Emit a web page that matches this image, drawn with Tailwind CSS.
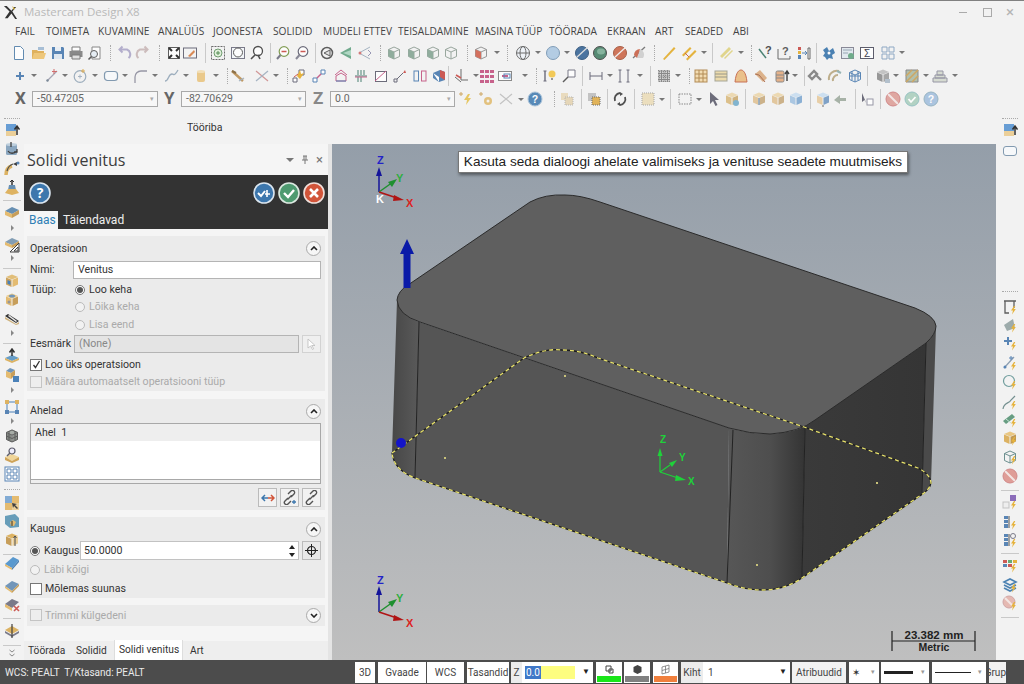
<!DOCTYPE html>
<html lang="en">
<head>
  <meta charset="UTF-8" />
  <title>Mastercam Design X8</title>
  <script src="https://cdn.jsdelivr.net/npm/@tailwindcss/browser@4"></script>
</head>
<body class="bg-[#f2f2f2] w-[1024px] h-[684px] overflow-hidden flex flex-col font-['Roboto',sans-serif] text-[#333]">

  <!-- title bar -->
  <div class="h-[23px] border-t border-[#808080] flex items-center shrink-0">
    <svg class="w-[15px] h-[15px] ml-[3px]" viewBox="0 0 16 16"><path d="M1 1l6 6-5 7h3l4-5 4 6h2l-5-8 4-5h-2l-3 4-5-5z" fill="#333"/><path d="M10 1l3 3-2 1z" fill="#c9a93a"/></svg>
    <span class="ml-[6px] text-[11.5px] text-[#b9b9b9] font-['Open_Sans',sans-serif]">Mastercam Design X8</span>
    <div class="ml-auto flex items-center text-[#b5b5b5]">
      <span class="w-[8px] h-[1px] bg-[#aaa] mr-[16px]"></span>
      <span class="w-[9px] h-[9px] border border-[#aaa] mr-[14px]"></span>
      <span class="text-[15px] leading-none mr-[10px]">×</span>
    </div>
  </div>

  <!-- menu -->
  <div class="h-[18px] flex items-center text-[10.2px] pl-[15px] shrink-0 text-[#444] whitespace-nowrap font-['Open_Sans',sans-serif]">
    <span class="w-[31px]">FAIL</span>
    <span class="w-[52px]">TOIMETA</span>
    <span class="w-[60px]">KUVAMINE</span>
    <span class="w-[55px]">ANALÜÜS</span>
    <span class="w-[60px]">JOONESTA</span>
    <span class="w-[50px]">SOLIDID</span>
    <span class="w-[75px]">MUDELI ETTEV</span>
    <span class="w-[77px]">TEISALDAMINE</span>
    <span class="w-[74px]">MASINA TÜÜP</span>
    <span class="w-[58px]">TÖÖRADA</span>
    <span class="w-[48px]">EKRAAN</span>
    <span class="w-[30px]">ART</span>
    <span class="w-[48px]">SEADED</span>
    <span>ABI</span>
  </div>

  <!-- toolbars -->
  <div id="row1" class="h-[23px] flex items-center shrink-0"></div>
  <div id="row2" class="h-[23px] flex items-center shrink-0"></div>
  <div class="h-[24px] flex items-center shrink-0 text-[10.5px] text-[#666]">
    <span class="w-[32px] pl-[15px] text-[17px] font-bold text-[#666]">X</span>
    <div class="w-[126px] h-[16px] border border-[#a9a9a9] bg-[#f7f7f7] flex items-center pl-[4px]">-50.47205<span class="ml-auto mr-[3px] text-[7px] text-[#aaa]">▾</span></div>
    <span class="w-[23px] pl-[6px] text-[17px] font-bold text-[#666]">Y</span>
    <div class="w-[125px] h-[16px] border border-[#a9a9a9] bg-[#f7f7f7] flex items-center pl-[4px]">-82.70629<span class="ml-auto mr-[3px] text-[7px] text-[#aaa]">▾</span></div>
    <span class="w-[24px] pl-[7px] text-[17px] font-bold text-[#888]">Z</span>
    <div class="w-[125px] h-[16px] border border-[#a9a9a9] bg-[#f7f7f7] flex items-center pl-[4px]">0.0<span class="ml-auto mr-[3px] text-[7px] text-[#aaa]">▾</span></div>
    <div id="row3" class="flex items-center h-full"></div>
  </div>
  <div class="h-[5px] shrink-0"></div>

  <!-- main -->
  <div class="flex-1 flex min-h-0">
    <div id="leftStrip" class="w-[24px] flex flex-col items-center shrink-0"></div>

    <div class="flex-1 flex flex-col min-w-0">
      <div class="h-[28px] shrink-0 pl-[163px] pt-[4px] text-[10.5px] text-[#333]">Tööriba</div>

      <div class="flex-1 flex min-h-0">
        <!-- panel -->
        <div class="w-[308px] shrink-0 bg-[#f5f5f5] border-r-[4px] border-[#e4e4e4] flex flex-col text-[10.6px]">
          <div class="h-[31px] shrink-0 flex items-center pl-[3px]">
            <span class="text-[16px] text-[#3c3c3c] font-['Open_Sans',sans-serif]">Solidi venitus</span>
            <div class="ml-auto flex items-center gap-[7px] pr-[5px] text-[#777]">
              <span class="w-0 h-0 border-x-[4px] border-x-transparent border-t-[4px] border-t-[#777]"></span>
              <svg class="w-[8px] h-[10px]" viewBox="0 0 8 10"><path d="M2 1h4M3 1v4M5 1v4M1 5h6M4 5v4" stroke="#777" fill="none"/></svg>
              <span class="text-[13px] leading-none">×</span>
            </div>
          </div>

          <div class="h-[54px] shrink-0 bg-[#333] flex flex-col">
            <div class="h-[36px] flex items-center pl-[5px] pr-[3px]">
              <svg class="w-[22px] h-[22px]" viewBox="0 0 22 22"><circle cx="11" cy="11" r="10" fill="#3d77ad" stroke="#dbe6f0" stroke-width="1.6"/><text x="11" y="16" text-anchor="middle" font-size="14" font-weight="700" fill="#fff" font-family="Open Sans">?</text></svg>
              <div class="ml-auto flex gap-[3px]">
                <svg class="w-[22px] h-[22px]" viewBox="0 0 22 22"><circle cx="11" cy="11" r="10" fill="#3d77ad" stroke="#dbe6f0" stroke-width="1.6"/><path d="M5 11l3 3 4-5" stroke="#fff" stroke-width="2" fill="none"/><path d="M14 8v7M12 12h5" stroke="#fff" stroke-width="1.6"/></svg>
                <svg class="w-[22px] h-[22px]" viewBox="0 0 22 22"><circle cx="11" cy="11" r="10" fill="#4e9a70" stroke="#dce9e1" stroke-width="1.6"/><path d="M6 11l4 4 6-7" stroke="#fff" stroke-width="2.4" fill="none"/></svg>
                <svg class="w-[22px] h-[22px]" viewBox="0 0 22 22"><circle cx="11" cy="11" r="10" fill="#d2553a" stroke="#f0dfda" stroke-width="1.6"/><path d="M7 7l8 8M15 7l-8 8" stroke="#fff" stroke-width="2.6"/></svg>
              </div>
            </div>
            <div class="h-[18px] flex items-end text-[12px]">
              <span class="h-[18px] w-[34px] bg-[#f5f5f5] text-[#2f7fb5] pl-[5px] leading-[18px]">Baas</span>
              <span class="text-[#eee] ml-[5px] leading-[18px]">Täiendavad</span>
            </div>
          </div>

          <!-- Operatsioon -->
          <section class="mx-[3px] mt-[7px] h-[155px] shrink-0 bg-[#ebebeb] px-[3px]">
            <div class="h-[25px] flex items-center justify-between pr-[1px]">
              <span>Operatsioon</span>
              <span class="w-[15px] h-[15px] rounded-full border border-[#aaa] bg-[#f6f6f6] flex items-center justify-center"><svg class="w-[8px] h-[5px]" viewBox="0 0 8 5"><path d="M1 4l3-3 3 3" stroke="#222" stroke-width="1.6" fill="none"/></svg></span>
            </div>
            <div class="h-[18px] flex items-center">
              <span class="w-[43px]">Nimi:</span>
              <div class="w-[248px] h-[18px] bg-white border border-[#b4b4b4] pl-[4px] leading-[16px]">Venitus</div>
            </div>
            <div class="mt-[2px] h-[17px] flex items-center">
              <span class="w-[44px]">Tüüp:</span>
              <span class="w-[10px] h-[10px] rounded-full border border-[#777] bg-white flex items-center justify-center ml-[1px]"><span class="w-[6px] h-[6px] rounded-full bg-[#555]"></span></span>
              <span class="ml-[4px]">Loo keha</span>
            </div>
            <div class="h-[18px] flex items-center pl-[45px] text-[#aaa]">
              <span class="w-[10px] h-[10px] rounded-full border border-[#bbb] bg-[#f2f2f2]"></span>
              <span class="ml-[4px]">Lõika keha</span>
            </div>
            <div class="h-[17px] flex items-center pl-[45px] text-[#aaa]">
              <span class="w-[10px] h-[10px] rounded-full border border-[#bbb] bg-[#f2f2f2]"></span>
              <span class="ml-[4px]">Lisa eend</span>
            </div>
            <div class="mt-[2px] h-[18px] flex items-center">
              <span class="w-[44px]">Eesmärk</span>
              <div class="w-[225px] h-[18px] bg-[#e4e4e4] border border-[#b4b4b4] pl-[4px] leading-[16px] text-[#888]">(None)</div>
              <div class="ml-[3px] w-[19px] h-[18px] bg-[#efefef] border border-[#d2d2d2] flex items-center justify-center"><svg class="w-[9px] h-[12px]" viewBox="0 0 9 12"><path d="M1 1v9l2.5-2 2 3.5 1.2-.8-2-3.2H8z" fill="#fff" stroke="#bbb" stroke-width=".8"/></svg></div>
            </div>
            <div class="mt-[3px] h-[17px] flex items-center">
              <span class="w-[12px] h-[12px] border border-[#777] bg-white flex items-center justify-center"><svg class="w-[9px] h-[9px]" viewBox="0 0 9 9"><path d="M1.5 5l2 2.5L7.5 1" stroke="#333" stroke-width="1.3" fill="none"/></svg></span>
              <span class="ml-[3px]">Loo üks operatsioon</span>
            </div>
            <div class="h-[18px] flex items-center text-[#aaa]">
              <span class="w-[12px] h-[12px] border border-[#c4c4c4] bg-[#eee]"></span>
              <span class="ml-[3px]">Määra automaatselt operatsiooni tüüp</span>
            </div>
          </section>

          <!-- Ahelad -->
          <section class="mx-[3px] mt-[8px] h-[111px] shrink-0 bg-[#ebebeb] px-[3px]">
            <div class="h-[24px] flex items-center justify-between pr-[1px]">
              <span>Ahelad</span>
              <span class="w-[15px] h-[15px] rounded-full border border-[#aaa] bg-[#f6f6f6] flex items-center justify-center"><svg class="w-[8px] h-[5px]" viewBox="0 0 8 5"><path d="M1 4l3-3 3 3" stroke="#222" stroke-width="1.6" fill="none"/></svg></span>
            </div>
            <div class="w-[291px] h-[57px] bg-white border border-[#a8a8a8]">
              <div class="h-[17px] bg-[#eeeeee] pl-[4px] leading-[17px] whitespace-pre">Ahel  1</div>
            </div>
            <div class="w-[291px] h-[4px] bg-[#eee] border-x border-b border-[#a8a8a8]"></div>
            <div class="mt-[4px] flex justify-end gap-[3px] w-[291px]">
              <div class="w-[19px] h-[19px] bg-[#f2f2f2] border border-[#bbb] flex items-center justify-center"><svg class="w-[14px] h-[8px]" viewBox="0 0 14 8"><path d="M4 1L1 4l3 3M1 4h6" stroke="#3d77ad" stroke-width="1.5" fill="none"/><path d="M10 1l3 3-3 3M13 4H7" stroke="#d2553a" stroke-width="1.5" fill="none"/></svg></div>
              <div class="w-[19px] h-[19px] bg-[#f2f2f2] border border-[#bbb] flex items-center justify-center"><svg class="w-[15px] h-[15px]" viewBox="0 0 15 15"><path d="M6 8L3 11a2 2 0 0 0 3 3l3-3M9 7l3-3a2 2 0 0 0-3-3L6 4M5.500 9.500l4-4" stroke="#555" stroke-width="1.4" fill="none"/><path d="M12 10v4M10 12h4" stroke="#3d77ad" stroke-width="1.3"/></svg></div>
              <div class="w-[19px] h-[19px] bg-[#f2f2f2] border border-[#bbb] flex items-center justify-center"><svg class="w-[15px] h-[15px]" viewBox="0 0 15 15"><path d="M6 8L3 11a2 2 0 0 0 3 3l3-3M9 7l3-3a2 2 0 0 0-3-3L6 4M5.500 9.500l4-4" stroke="#555" stroke-width="1.400" fill="none"/></svg></div>
            </div>
          </section>

          <!-- Kaugus -->
          <section class="mx-[3px] mt-[7px] h-[81px] shrink-0 bg-[#ebebeb] px-[3px]">
            <div class="h-[24px] flex items-center justify-between pr-[1px]">
              <span>Kaugus</span>
              <span class="w-[15px] h-[15px] rounded-full border border-[#aaa] bg-[#f6f6f6] flex items-center justify-center"><svg class="w-[8px] h-[5px]" viewBox="0 0 8 5"><path d="M1 4l3-3 3 3" stroke="#222" stroke-width="1.6" fill="none"/></svg></span>
            </div>
            <div class="h-[19px] flex items-center">
              <span class="w-[10px] h-[10px] rounded-full border border-[#777] bg-white flex items-center justify-center"><span class="w-[6px] h-[6px] rounded-full bg-[#555]"></span></span>
              <span class="ml-[4px] w-[36px]">Kaugus</span>
              <div class="w-[219px] h-[19px] bg-white border border-[#c2c2c2] pl-[3px] flex items-center justify-between pr-[2px]">50.0000<svg class="w-[8px] h-[12px]" viewBox="0 0 8 12"><path d="M4 0l3 4H1zM4 12l3-4H1z" fill="#222"/></svg></div>
              <div class="ml-[3px] w-[19px] h-[19px] bg-[#e9e9e9] border border-[#bbb] flex items-center justify-center"><svg class="w-[13px] h-[13px]" viewBox="0 0 13 13"><circle cx="6.500" cy="6.500" r="4" fill="none" stroke="#222" stroke-width="1.200"/><path d="M6.500 0v13M0 6.500h13" stroke="#222"/></svg></div>
            </div>
            <div class="h-[20px] flex items-center text-[#aaa]">
              <span class="w-[10px] h-[10px] rounded-full border border-[#bbb] bg-[#f2f2f2]"></span>
              <span class="ml-[4px]">Läbi kõigi</span>
            </div>
            <div class="h-[17px] flex items-center">
              <span class="w-[12px] h-[12px] border border-[#777] bg-white"></span>
              <span class="ml-[3px]">Mõlemas suunas</span>
            </div>
          </section>

          <!-- Trimmi -->
          <section class="mx-[3px] mt-[7px] h-[21px] shrink-0 bg-[#ebebeb] px-[3px] flex items-center justify-between pr-[4px] text-[#aaa]">
            <div class="flex items-center">
              <span class="w-[12px] h-[12px] border border-[#c4c4c4] bg-[#eee]"></span>
              <span class="ml-[3px]">Trimmi külgedeni</span>
            </div>
            <span class="w-[15px] h-[15px] rounded-full border border-[#aaa] bg-[#f6f6f6] flex items-center justify-center"><svg class="w-[8px] h-[5px]" viewBox="0 0 8 5"><path d="M1 1l3 3 3-3" stroke="#222" stroke-width="1.6" fill="none"/></svg></span>
          </section>

          <div class="flex-1"></div>
          <div class="h-[19px] shrink-0 flex items-end text-[10.2px] bg-[#eeeeee] whitespace-nowrap">
            <span class="w-[52px] pl-[4px] leading-[19px]">Töörada</span>
            <span class="w-[38px] leading-[19px]">Solidid</span>
            <span class="w-[69px] h-[20px] bg-white pl-[4px] leading-[19px] border-x border-[#ddd]">Solidi venitus</span>
            <span class="ml-[7px] leading-[19px]">Art</span>
          </div>
        </div>

        <!-- viewport -->
        <div class="relative w-[664px] shrink-0 overflow-hidden bg-gradient-to-b from-[#949ea9] to-[#bfbfbf]">
          <svg class="absolute inset-0 w-[664px] h-[516px]" viewBox="332 144 664 516" font-family="Liberation Sans" font-weight="700">
            <defs>
              <linearGradient id="corner" x1="0" x2="1" y1="0" y2="0"><stop offset="0" stop-color="#575757"/><stop offset=".55" stop-color="#4e4e4e"/><stop offset="1" stop-color="#343434"/></linearGradient>
              <linearGradient id="leftc" x1="0" x2="1" y1="0" y2="0"><stop offset="0" stop-color="#474747"/><stop offset="1" stop-color="#5a5a5a"/></linearGradient>
              <linearGradient id="rightf" x1="0" x2="1" y1="0" y2="0"><stop offset="0" stop-color="#3a3a3a"/><stop offset="1" stop-color="#353535"/></linearGradient>
            </defs>
            <!-- body faces -->
            <path d="M397 300 L392 453 Q394 470 415 478 L419 322 Q400 315 397 300Z" fill="url(#leftc)"/>
            <path d="M419 322 L729 428 L727 583 L415 478Z" fill="#555"/>
            <path d="M729 428 Q750 434 770 434 Q795 432 805 426 L802 578 Q785 590 762 590 Q745 590 727 583Z" fill="url(#corner)"/>
            <path d="M805 426 L926 343 L922 495 L802 578Z" fill="url(#rightf)"/>
            <path d="M926 343 Q936 334 936 326 L931 483 Q930 490 922 495Z" fill="#4a4a4a"/>
            <!-- top face -->
            <path d="M397 300 Q398 291 408 285 L530 202 Q545 194 565 195 Q580 195 600 202 L915 308 Q935 316 936 326 Q936 334 926 343 L815 420 Q800 432 770 434 Q750 434 729 428 L420 322 Q398 315 397 300Z" fill="#5f5f5f" stroke="#2b2b2b" stroke-width="1"/>
            <!-- edges -->
            <path d="M419 322L415 478M733 430L727 583M805 426L802 578M926 343L922 495" stroke="#222" fill="none"/>
            <!-- chain -->
            <g fill="none" stroke-width="1.300">
              <path d="M392 453 L524 358 Q545 348 562 350 Q580 350 598 358 L804 427 L918 468 Q930 474 931 483 Q930 490 918 497 L802 578 Q785 590 762 590 Q745 590 727 583 L415 478 Q394 470 392 453Z" stroke="#1c1c1c"/>
              <path d="M392 453 L524 358 Q545 348 562 350 Q580 350 598 358 L804 427 L918 468 Q930 474 931 483 Q930 490 918 497 L802 578 Q785 590 762 590 Q745 590 727 583 L415 478 Q394 470 392 453Z" stroke="#e8e26c" stroke-dasharray="4 3"/>
            </g>
            <circle cx="401" cy="443" r="5" fill="#1414c8"/>
            <g fill="#c8c27a"><rect x="564" y="375" width="2" height="2"/><rect x="444" y="457" width="2" height="2"/><rect x="756" y="564" width="2" height="2"/><rect x="876" y="482" width="2" height="2"/></g>
            <!-- normal arrow -->
            <path d="M403.500 288V254h-3.500L407 239l7 15h-3.500V288Z" fill="#0a1aa8"/>
            <!-- view gnomon -->
            <g font-size="11">
              <path d="M379 192V172" stroke="#14149a" stroke-width="1.500"/><path d="M379 167l-3 9h6z" fill="#14149a"/>
              <path d="M379 192l14-10" stroke="#1f8f2f" stroke-width="1.500"/><path d="M397 179l-9 3 4 5z" fill="#1f8f2f"/>
              <path d="M379 192l18 6" stroke="#b01414" stroke-width="1.500"/><path d="M404 200l-10-5-1 6z" fill="#b01414"/>
              <text x="377" y="164" fill="#2222c8">Z</text><text x="396" y="182" fill="#2fae3f">Y</text><text x="406" y="207" fill="#dd2222">X</text><text x="376" y="203" fill="#fff">K</text>
            </g>
            <!-- bottom-left gnomon -->
            <g font-size="11">
              <path d="M379 612V592" stroke="#14149a" stroke-width="1.500"/><path d="M379 586l-3 9h6z" fill="#14149a"/>
              <path d="M379 612l14-10" stroke="#1f8f2f" stroke-width="1.500"/><path d="M397 599l-9 3 4 5z" fill="#1f8f2f"/>
              <path d="M379 612l18 6" stroke="#b01414" stroke-width="1.500"/><path d="M404 620l-10-5-1 6z" fill="#b01414"/>
              <text x="377" y="584" fill="#2222c8">Z</text><text x="396" y="602" fill="#2fae3f">Y</text><text x="406" y="627" fill="#dd2222">X</text>
            </g>
            <!-- chain gnomon -->
            <g font-size="10">
              <path d="M660 472V452" stroke="#1fd13a" stroke-width="1.200"/><path d="M660 448l-2.500 8h5z" fill="#1fd13a"/>
              <path d="M660 472l10-7" stroke="#1fd13a" stroke-width="1.200"/><path d="M677 460l-8 3 3 4z" fill="#1fd13a"/>
              <path d="M660 472l18 6" stroke="#1fd13a" stroke-width="1.200"/><path d="M686 480l-10-5-1 6z" fill="#1fd13a"/>
              <text x="660" y="443" fill="#1fd13a">Z</text><text x="679" y="461" fill="#1fd13a">Y</text><text x="688" y="485" fill="#1fd13a">X</text>
            </g>
            <!-- scale -->
            <path d="M892 631V651M975 631V651M892 641H975" stroke="#222" stroke-width="1.200" fill="none"/>
            <text x="934" y="639" font-size="11.500" text-anchor="middle" fill="#222">23.382 mm</text>
            <text x="934" y="651" font-size="10.500" text-anchor="middle" fill="#222">Metric</text>
          </svg>
          <div class="absolute left-[126px] top-[7px] w-[450px] h-[22px] bg-white border border-[#777] shadow-[1px_2px_3px_rgba(0,0,0,.45)] text-center leading-[20px] text-[13.6px] whitespace-nowrap font-['Liberation_Sans',sans-serif] text-[#222]">Kasuta seda dialoogi ahelate valimiseks ja venituse seadete muutmiseks</div>
        </div>
      </div>
    </div>

    <div id="rightStrip" class="w-[28px] flex flex-col items-center shrink-0"></div>
  </div>

  <!-- status bar -->
  <div class="h-[24px] shrink-0 bg-[#4c4c4c] flex items-center text-[10px] text-[#444] pr-[2px]">
    <span class="w-[355px] pl-[5px] text-[#eaeaea] whitespace-pre">WCS: PEALT  T/Ktasand: PEALT</span>
    <div class="w-[20px] h-[21px] bg-white flex items-center justify-center">3D</div>
    <div class="ml-[3px] w-[48px] h-[21px] bg-white flex items-center justify-center">Gvaade</div>
    <div class="ml-[1px] w-[37px] h-[21px] bg-white flex items-center justify-center">WCS</div>
    <div class="ml-[3px] w-[42px] h-[21px] bg-white flex items-center justify-center">Tasandid</div>
    <div class="ml-[2px] w-[11px] h-[21px] bg-[#ececec] flex items-center justify-center">Z</div>
    <div class="w-[71px] h-[21px] bg-white flex items-center pl-[3px]">
      <div class="w-[50px] h-[13px] bg-[#fdfd80] flex items-center"><span class="bg-[#3f78c8] text-white px-[1px] leading-[13px]">0.0</span></div>
      <span class="ml-auto mr-[3px] text-[8px] text-[#222]">▼</span>
    </div>
    <div class="ml-[3px] w-[26px] h-[21px] bg-white flex flex-col items-center justify-between"><svg class="w-[11px] h-[11px] mt-[2px]" viewBox="0 0 11 11"><path d="M2 2h5v5H2zM5 5h4v4H5z" fill="none" stroke="#444"/></svg><span class="w-[24px] h-[6px] bg-[#19e619] mb-[1px]"></span></div>
    <div class="ml-[2px] w-[26px] h-[21px] bg-white flex flex-col items-center justify-between"><svg class="w-[11px] h-[11px] mt-[2px]" viewBox="0 0 11 11"><path d="M5.500 1l4 2v5l-4 2-4-2V3z" fill="#444"/></svg><span class="w-[24px] h-[6px] bg-[#808080] mb-[1px]"></span></div>
    <div class="ml-[3px] w-[25px] h-[21px] bg-white flex flex-col items-center justify-between"><svg class="w-[11px] h-[11px] mt-[2px]" viewBox="0 0 11 11"><path d="M2 3l7-2v7l-7 2zM5.500 2v7M2 6.500l7-2" fill="none" stroke="#777" stroke-width=".8"/></svg><span class="w-[23px] h-[6px] bg-[#f07f3c] mb-[1px]"></span></div>
    <div class="ml-[3px] w-[22px] h-[21px] bg-[#ececec] flex items-center justify-center">Kiht</div>
    <div class="w-[87px] h-[21px] bg-white flex items-center pl-[5px]">1<span class="ml-auto mr-[3px] text-[8px] text-[#222]">▼</span></div>
    <div class="ml-[2px] w-[54px] h-[21px] bg-[#f2f2f2] flex items-center justify-center">Atribuudid</div>
    <div class="ml-[3px] w-[30px] h-[21px] bg-white flex items-center pl-[3px] text-[#333]">✶<span class="ml-auto mr-[4px] text-[7px] text-[#999]">▾</span></div>
    <div class="ml-[2px] w-[48px] h-[21px] bg-white flex items-center pl-[3px]"><span class="w-[29px] h-[3px] bg-[#222]"></span><span class="ml-auto mr-[4px] text-[7px] text-[#999]">▾</span></div>
    <div class="ml-[3px] w-[54px] h-[21px] bg-white flex items-center pl-[3px]"><span class="w-[36px] h-[1px] bg-[#222]"></span><span class="ml-auto mr-[4px] text-[7px] text-[#999]">▾</span></div>
    <div class="ml-[3px] w-[17px] h-[21px] bg-[#f2f2f2] overflow-hidden flex items-center justify-end whitespace-nowrap">Grup</div>
  </div>

  <script>
    // small colour helpers for the icon set
    const cube = (t, l, r) => `<path d="M8 1.500l6 2.500-6 2.500L2 4z" fill="${t}"/><path d="M2 4.500l5.500 2.300V14L2 11.500z" fill="${l}"/><path d="M14 4.500L8.500 6.800V14l5.500-2.500z" fill="${r}"/>`;
    const wire = (c) => `<path d="M8 2l5.500 2.500v7L8 14l-5.500-2.500v-7zM2.500 4.500L8 7l5.500-2.500M8 7v7" fill="none" stroke="${c}"/>`;
    const sphere = (c, d) => `<ellipse cx="8" cy="8" rx="6.500" ry="6.500" fill="${c}" stroke="${d}"/>`;
    const slab = `<path d="M1 6l7-4 7 3-7 4z" fill="#4f7ea8"/><path d="M1 6l7 3v4L1 10z" fill="#e2b25a"/><path d="M15 5L8 9v4l7-4z" fill="#c09040"/>`;
    const bolt = `<path d="M12 7l-3 4.500h2l-1 4 3.800-5.500h-2l1.500-3z" fill="#e5a91d"/>`;
    const I = {
      new: `<path d="M3.500 1.500h6l3 3v10h-9z" fill="#fff" stroke="#4a7aa6"/>`,
      open: `<path d="M1 5h5l1 1h6v8H1z" fill="#dca644"/><path d="M7 2h6v3H7z" fill="#9ab6d0"/><path d="M3 8h12l-2 6H1z" fill="#eec067"/>`,
      save: `<path d="M2 2h11l1 1v11H2z" fill="#3f73ab"/><path d="M5 2h6v4H5z" fill="#e8eef4"/><path d="M4 9h8v5H4z" fill="#dbe6f0"/>`,
      print: `<path d="M4 2h8v4H4z" fill="#fff" stroke="#666"/><path d="M1.500 6h13v6h-13z" fill="#777"/><path d="M4 10h8v4H4z" fill="#ddd" stroke="#666"/>`,
      prev: `<path d="M5 2h8v12H5z" fill="#fff" stroke="#777"/><circle cx="7" cy="9" r="3.500" fill="#e3edf5" stroke="#444"/><path d="M4.500 11.500L1.500 14.500" stroke="#444" stroke-width="1.600"/>`,
      undo: `<path d="M12.500 13A5 5 0 0 0 11 4.500H4M6.500 1.500l-3 3 3 3" fill="none" stroke="#a9a3c6" stroke-width="2"/>`,
      redo: `<path d="M3.500 13A5 5 0 0 1 5 4.500h7M9.500 1.500l3 3-3 3" fill="none" stroke="#c6b3b3" stroke-width="2"/>`,
      fit: `<rect x="2.500" y="2.500" width="11" height="11" fill="#fff" stroke="#444"/><path d="M3 3l3 3M13 3l-3 3M3 13l3-3M13 13l-3-3" stroke="#111" stroke-width="2"/>`,
      view: `<rect x="1.500" y="3" width="13" height="10" fill="#f4f4f4" stroke="#556"/><path d="M6 11l6-6 1 2-5 5z" fill="#d5793b"/>`,
      zwin: `<rect x="1.500" y="1.500" width="13" height="13" fill="none" stroke="#555" stroke-dasharray="2 1"/><circle cx="8" cy="8" r="4" fill="#dff0d8" stroke="#5a8f5a"/><path d="M8 6v4M6 8h4" stroke="#3a7a3a"/>`,
      zprev: `<rect x="1.500" y="2.500" width="13" height="11" fill="#f2f6fa" stroke="#667"/><circle cx="8" cy="7.500" r="4.500" fill="#fff" stroke="#444"/>`,
      zsel: `<circle cx="9" cy="6" r="4.500" fill="#fff" stroke="#333" stroke-width="1.300"/><path d="M6 10l-4 4M9 10l2 4" stroke="#333" stroke-width="1.600"/>`,
      zout: `<circle cx="9" cy="6.500" r="4.800" fill="#fff" stroke="#6f8f3a" stroke-width="1.200"/><path d="M6.500 6.500h5" stroke="#c6403a" stroke-width="1.500"/><path d="M5.500 10l-3.500 4" stroke="#667" stroke-width="2"/>`,
      zout2: `<circle cx="9" cy="6.500" r="4.800" fill="#fff" stroke="#556" stroke-width="1.200"/><path d="M6.500 6.500h5" stroke="#c6403a" stroke-width="1.500"/><path d="M5.500 10l-3.500 4" stroke="#778" stroke-width="2"/>`,
      rot: `<circle cx="8" cy="8" r="5.500" fill="none" stroke="#444" stroke-width="1.500"/><path d="M5 8l6-3v6z" fill="#ddd" stroke="#444"/>`,
      plane: `<path d="M2 8l11-6v12z" fill="#5b9e7c"/><path d="M5 8l8-3v6z" fill="#a5d3bc"/>`,
      plane2: `<path d="M2 8l11-6M2 8l11 6" stroke="#9ab" fill="none"/><circle cx="3" cy="8" r="1.500" fill="#c66"/><path d="M11 5l3 3-3 3" stroke="#88a" fill="none"/>`,
      vcube: `${wire('#8a9a90')}<path d="M2.500 4.500L8 7v7l-5.500-2.500z" fill="#7fa18f"/>`,
      vcube2: `${wire('#8a9a90')}`,
      rcube: `${wire('#888')}<path d="M2.500 4.500L8 7v7l-5.500-2.500z" fill="#cf5a45"/>`,
      globe: `${sphere('#eef3f8','#555')}<ellipse cx="8" cy="8" rx="3" ry="6.500" fill="none" stroke="#555"/><path d="M1.500 8h13" stroke="#555"/>`,
      ball: `${sphere('#a9c6e1','#6d8fae')}`,
      sblue: `${sphere('#2e5f92','#1f4670')}<path d="M2 13L14 2" stroke="#ddd" stroke-width="1.300"/>`,
      sgreen: `${sphere('#3d7a5f','#333')}<ellipse cx="9" cy="6.500" rx="4" ry="3" fill="#72a98f"/>`,
      sred: `${sphere('#c9603f','#9a4529')}<path d="M2 13L14 2" stroke="#eee" stroke-width="1.300"/>`,
      sgray: `<path d="M2 13L14 2" stroke="#666" stroke-width="1.300"/><path d="M9 4a6 6 0 0 1 3 9H6z" fill="#ccc"/><path d="M9 4a6 6 0 0 0-6 6l3 3z" fill="#c6593c"/>`,
      pen: `<path d="M2 14L13 2l1.500 1.500L3.500 15z" fill="#e2a91f"/>`,
      pen2: `<path d="M1 10L9 2l1.500 1.500-8 8zM5 14l9-9 1.500 1.500-9 9z" fill="#e2a91f"/><path d="M4 8l4 4" stroke="#c4502f"/>`,
      pen3: `<path d="M1 11L10 2l2 2-9 9zM5 13l8-8 1 1-8 8z" fill="#ddd07a"/>`,
      qang: `<path d="M2 4l7 9" stroke="#2f6f5f" stroke-width="1.500"/><text x="8" y="9" font-size="11" font-weight="700" fill="#333">?</text>`,
      qdist: `<path d="M2 4v10h12V11" stroke="#555" fill="none"/><text x="6" y="10" font-size="11" font-weight="700" fill="#444">?</text>`,
      qlist: `<path d="M2 2h3v3H2z" fill="#c6403a"/><path d="M2 6h3v3H2z" fill="#e2a91f"/><path d="M2 10h3v4H2z" fill="#3f73ab"/><path d="M6 8h4M9 6l2 2-2 2" stroke="#3f73ab" fill="none"/><path d="M12 3h2v11h-2z" fill="none" stroke="#555"/>`,
      tools: `<path d="M2 5l4-3 2 4 4-3 2 5-3 2 1 4-4-1-2 2-2-3-2-1 2-3z" fill="#2f6ea8"/><circle cx="8" cy="8" r="1.500" fill="#fff"/>`,
      sheet: `<rect x="1.500" y="2.500" width="12" height="11" fill="#dfe7ee" stroke="#778"/><path d="M3 5h9M3 8h5" stroke="#89a"/><circle cx="11" cy="11" r="3" fill="#5aa07a"/>`,
      sum: `<rect x="1.500" y="2.500" width="13" height="11" fill="#fff" stroke="#445"/><text x="8" y="12" text-anchor="middle" font-size="10" fill="#223">Σ</text>`,
      grid: `<path d="M2 2h5v5H2zM9 2h5v5H9zM2 9h5v5H2zM9 9h5v5H9z" fill="none" stroke="#7f9cbc"/>`,
      plus: `<path d="M8 4v8M4 8h8" stroke="#3f73ab" stroke-width="2"/>`,
      line: `<path d="M3 13L13 3" stroke="#99a" stroke-width="1.200"/><path d="M10 1v5M8 3.500h5" stroke="#c55" /><circle cx="3.500" cy="12.500" r="1.200" fill="#678"/>`,
      circ: `<circle cx="8" cy="8.500" r="5.800" fill="none" stroke="#8fa3b5" stroke-width="1.200"/><path d="M8 6.500v4M6 8.500h4" stroke="#9ab"/><path d="M11 1v4M9 3h4" stroke="#d9a13a"/>`,
      rect: `<rect x="1.500" y="3.500" width="13" height="9" rx="3" fill="#f7fafc" stroke="#6f8ba5" stroke-width="1.200"/>`,
      arc: `<path d="M2 15V9a6 6 0 0 1 6-6h6" fill="none" stroke="#889" stroke-width="1.300"/>`,
      spline: `<path d="M1 13c4 0 3-7 7-7 2 0 2 3 6-4" fill="none" stroke="#8fa3b5" stroke-width="1.300"/>`,
      cyl: `<rect x="4" y="3" width="8" height="11" rx="2" fill="#e9c27a"/><ellipse cx="8" cy="3.500" rx="4" ry="1.500" fill="#f2dcae"/>`,
      trim: `<path d="M2 3l11 10" stroke="#b88a4a" stroke-width="2.400"/><path d="M9 13l5-3" stroke="#9ab" stroke-width="1.300"/><path d="M2 3l4 2" stroke="#7a5a2a" stroke-width="2"/>`,
      xsect: `<path d="M2 3l12 10" stroke="#c88" stroke-width="1.200"/><path d="M14 3L2 13" stroke="#9ab" stroke-width="1.200"/>`,
      m1: `<path d="M8 2h5v5H8zM2 10h4v4H2z" fill="#fff" stroke="#556"/><path d="M6 8l3-6 1 4 3-1-4 6z" fill="#e5a91d"/><path d="M3 9l4-3" stroke="#c6403a"/>`,
      m2: `<path d="M2 10h4v4H2zM10 2h4v4h-4z" fill="#fff" stroke="#3f73ab"/><path d="M6 10l4-4" stroke="#c04a7a" stroke-width="1.500"/>`,
      m3: `<path d="M2 7l6-5 6 5M3 13V8l5-3 5 3v5z" fill="none" stroke="#c04a7a"/><path d="M3 13h10" stroke="#3f73ab"/>`,
      m4: `<path d="M2 8h12M5 2v5M8 2v5M11 2v5M5 9v5M8 9v5" stroke="#2f6e5f" fill="none"/><path d="M2 9h12" stroke="#c04a7a"/>`,
      m5: `<rect x="2.500" y="3.500" width="11" height="10" fill="#fff" stroke="#556"/><path d="M2 13l11-10" stroke="#c04a7a"/>`,
      m6: `<path d="M2 14h3v-3H2zM5 11l6-6" stroke="#556" fill="none"/><path d="M11 5l2-3 1 3z" fill="#c6403a"/>`,
      m7: `<rect x="2" y="3" width="4.500" height="10" fill="none" stroke="#3f73ab"/><rect x="9.500" y="3" width="4.500" height="10" fill="none" stroke="#c04a7a"/>`,
      m8: `<path d="M2 5l7-3 5 2v8l-6 2-6-4z" fill="#3f73ab"/><path d="M9 2l5 2v8l-5-3z" fill="#c6403a"/><path d="M2 5l6 4v5" fill="#fff"/>`,
      ang: `<path d="M8 1v11h7M2 9l6 5" stroke="#555" fill="none"/><path d="M3 7l5 3" stroke="#c6403a" stroke-width="1.500"/>`,
      arr: `<path d="M1 2h4v3H1zM6 2h4v3H6zM11 2h4v3h-4zM1 7h4v3H1zM6 7h4v3H6zM11 7h4v3h-4zM1 12h4v3H1zM6 12h4v3H6zM11 12h4v3h-4z" fill="#c04a7a"/>`,
      boxp: `<rect x="1.500" y="3.500" width="13" height="9" fill="#fff" stroke="#777"/><path d="M5 8h6" stroke="#c04a7a" stroke-width="2"/><rect x="7" y="6" width="6" height="4" fill="none" stroke="#3f73ab"/>`,
      hint: `<path d="M3 3v10" stroke="#556" stroke-width="1.400"/><path d="M1.500 3h3M1.500 13h3" stroke="#556"/><circle cx="10" cy="6" r="3.500" fill="#f2c33d"/><path d="M9 10h2v2H9z" fill="#888"/>`,
      note: `<path d="M7 2h7v7H7z" fill="#fff" stroke="#667"/><path d="M2 14l5-5" stroke="#444" stroke-width="1.500"/>`,
      hdim: `<path d="M2 4v8M14 4v8M2 8h12" stroke="#556" fill="none"/>`,
      vdim: `<path d="M4 2v12M12 2v12M2.500 2h3M2.500 14h3M10.500 2h3M10.500 14h3" stroke="#556" fill="none"/>`,
      hatch: `<rect x="2" y="2" width="12" height="12" fill="#777"/><path d="M2 4h12M2 7h12M2 10h12M2 13h12M4 2v12M7 2v12M10 2v12M13 2v12" stroke="#eee" stroke-dasharray="1 1"/>`,
      sgrid: `<rect x="2" y="2" width="12" height="12" fill="#f2d9a8" stroke="#a87a3a"/><path d="M6 2v12M10 2v12M2 6h12M2 10h12" stroke="#a87a3a"/>`,
      sgrid2: `<rect x="2" y="3" width="12" height="10" fill="#ecd7a0" stroke="#998"/><path d="M2 6h12M2 9h12" stroke="#887"/>`,
      dome: `<path d="M2 14C3 4 6 2 8 2s5 2 6 12z" fill="#e9b878" stroke="#c05a3a"/>`,
      sweep: `<path d="M2 6l5-4 7 8-4 4z" fill="#d9a878"/><path d="M2 6l4 1 6 7" stroke="#a05a3a" fill="none"/>`,
      cylp: `<rect x="2" y="3" width="8" height="11" rx="1.500" fill="#e3a878" stroke="#777"/><path d="M2 7h8M2 10h8" stroke="#777"/><path d="M13 13V4M11 6l2-3 2 3" stroke="#222" fill="none" stroke-width="1.400"/>`,
      hammer: `<path d="M2 8l5-5 3 3-5 5zM9 7l5 5" stroke="#777" stroke-width="2.400" fill="none"/>`,
      arcs: `<path d="M2 12a8 8 0 0 1 10-9M6 13a5 5 0 0 1 5-6" stroke="#b5a37a" stroke-width="2" fill="none"/><path d="M10 3l4 2" stroke="#8aa" stroke-width="2"/>`,
      mesh: `${wire('#3f73ab')}<path d="M5 3v9M11 3v9M2.500 8L13.500 8" stroke="#3f73ab"/>`,
      stack: `${cube('#bbb','#888','#999')}<path d="M10 11h5v4h-5z" fill="#a9b8c6"/>`,
      lay: `<path d="M2 2h12v12H2z" fill="#a8b8a0" stroke="#777"/><path d="M2 14L14 2M2 8l6-6M8 14l6-6" stroke="#c89a4a" stroke-width="1.500"/>`,
      stair: `<path d="M5 3h6v4H5zM3 7h10v3H3zM1 10h14v4H1z" fill="#d2d8cc" stroke="#889"/>`,
      qbolt: `<path d="M3 1v4M1 3h4" stroke="#c89a4a"/><path d="M10 3l-4 6h3l-1 5 5-7h-3l2-4z" fill="#e5c04a"/>`,
      qgear: `<path d="M3 1v4M1 3h4" stroke="#c89a4a"/><circle cx="10" cy="10" r="4" fill="#e0b96a"/><circle cx="10" cy="10" r="1.500" fill="#f2f2f2"/>`,
      xpale: `<path d="M2 3l12 10M14 3L2 13" stroke="#bbb" stroke-width="1.200"/>`,
      help: `<circle cx="8" cy="8" r="7" fill="#3d77ad" stroke="#9fbcd6"/><text x="8" y="12" text-anchor="middle" font-size="10.500" font-weight="700" fill="#fff">?</text>`,
      pale1: `<path d="M2 2h7v7H2z" fill="#e8d7b5"/><path d="M6 6h8v8H6z" fill="#e3d2ae" stroke="#aaa" stroke-dasharray="1 1"/>`,
      pale2: `<path d="M2 2h8v8H2z" fill="#bbb"/><path d="M6 6h8v8H6z" fill="#dfa93f" stroke="#555" stroke-dasharray="1 1"/>`,
      cyc: `<path d="M3 10a6 6 0 0 1 5-8M13 6a6 6 0 0 1-5 8" stroke="#333" stroke-width="1.800" fill="none"/><path d="M8 1l3 2-3 2zM8 11l-3 2 3 2z" fill="#333"/>`,
      dashy: `<rect x="2" y="2" width="12" height="12" fill="#eadbb5" stroke="#999" stroke-dasharray="1 1"/>`,
      dash: `<rect x="2" y="3" width="12" height="10" fill="none" stroke="#777" stroke-dasharray="1.500 1"/>`,
      cur: `<path d="M4 1v12l3-3 2.500 5 2-1L9 9h4z" fill="#556"/>`,
      cchk: `${cube('#ecd5a8','#d9b87a','#c9a86a')}<circle cx="12" cy="12" r="3" fill="#6faac9"/>`,
      p1: `${cube('#ecd5a8','#e0c090','#c6a878')}<path d="M8 7v7" stroke="#3f73ab"/>`,
      p2: `${cube('#ecd5a8','#e0c090','#c6a878')}`,
      p3: `${cube('#c6dcf0','#9fc0e0','#7aa5cf')}`,
      p4: `${cube('#c6dcf0','#e6c89a','#6d95c0')}<path d="M8 14v2" stroke="#555"/>`,
      back: `<path d="M2 9l6-5v3h6v3H8v3z" fill="#9aa89a"/>`,
      curc: `<path d="M3 2v9l2.500-2 2 3.500" fill="#556"/><rect x="8" y="8" width="6" height="6" fill="#fff" stroke="#889"/>`,
      no: `<circle cx="8" cy="8" r="7" fill="#dc9a94" stroke="#c77"/><path d="M3 3l10 10" stroke="#f4e4e2" stroke-width="2"/>`,
      ok: `<circle cx="8" cy="8" r="7" fill="#a8cdbb" stroke="#8bb"/><path d="M4.500 8l2.500 3 4.500-5" stroke="#fff" stroke-width="1.800" fill="none"/>`,
      qp: `<circle cx="8" cy="8" r="7" fill="#9fbcdc" stroke="#8ab"/><text x="8" y="12" text-anchor="middle" font-size="10.500" font-weight="700" fill="#fff">?</text>`,
      // left strip
      tb: `<rect x="2" y="2" width="10" height="7" fill="#4f8fcf"/><rect x="2" y="9" width="10" height="5" fill="#eac98a"/><path d="M13 13V5M10.500 7.500L13 4l2.500 3.500" stroke="#111" stroke-width="1.500" fill="none"/>`,
      tb2: `<rect x="2" y="3" width="11" height="11" rx="1.500" fill="#7a9bb8"/><ellipse cx="7.500" cy="3.500" rx="5.500" ry="1.500" fill="#b5c9da"/><path d="M7 1v5" stroke="#222" stroke-width="1.300"/><path d="M4 10c2 3 6 3 9 0M13 8v3h-3" stroke="#222" stroke-width="1.300" fill="none"/>`,
      bend: `<path d="M2 15c0-5 2-8 6-9" stroke="#d9a84a" stroke-width="3.500" fill="none"/><path d="M3 11c1-4 3-6 6-7" stroke="#333" stroke-width="1.200" fill="none"/><path d="M9 4l4-2v4z" fill="#222"/><circle cx="14" cy="3" r="1.500" fill="#3f73ab"/>`,
      hous: `<path d="M8 1v6" stroke="#111" stroke-width="1.500"/><path d="M6 3l2-2 2 2" stroke="#111" fill="none"/><path d="M5 6h6l1 5H4z" fill="#4f7ea8"/><path d="M1 14l3-4h8l3 4-7 2z" fill="#dba94a"/>`,
      sh1: slab,
      sh2: `<path d="M1 5l7-4 7 3-7 4z" fill="#6f8faa"/><path d="M1 5l7 3v3L1 8z" fill="#e2b25a"/><path d="M15 4L8 8v3l7-4z" fill="#c09040"/><path d="M6 15l9-9v9z" fill="#fff" stroke="#222"/><path d="M10 14l4-4v4z" fill="none" stroke="#222"/>`,
      sh3: `${cube('#dfb565','#c69542','#e2b25a')}<path d="M3.500 7l3 1.300v3.800l-3-1.300z" fill="#2f6fb0"/>`,
      sh4: `${cube('#e8c070','#e2b25a','#c09040')}<ellipse cx="8" cy="4" rx="3" ry="1.500" fill="#5c87b0"/><circle cx="5" cy="10" r="1.500" fill="#888"/>`,
      sh5: `<path d="M1 5l3-2 11 7-3 2z" fill="#111"/><path d="M4 5l1-1 8 6-1 1z" fill="#e8e8e8"/><path d="M1 6l11 7 3-2v2l-3 1L1 8z" fill="#c9a86a"/>`,
      sh6: `<path d="M1 10l7-3 7 3-7 3z" fill="#4f8fc0"/><path d="M1 10l7 3 7-3v2l-7 3-7-3z" fill="#d9a84a"/><path d="M8 8V2M5.500 4.500L8 1l2.500 3.500" stroke="#111" stroke-width="1.500" fill="none"/>`,
      sh7: `<path d="M2 4l4-3 5 2-4 3z" fill="#5c87b0"/><path d="M2 4l5 2v6l-5-2z" fill="#e2b25a"/><path d="M11 3v5L7 12V6z" fill="#c09040"/><rect x="9" y="9" width="6" height="6" fill="#2f6fb0"/>`,
      frame: `<path d="M3 3h10v10H3z" fill="none" stroke="#2f6fb0"/><path d="M1 1h4v4H1zM11 1h4v4h-4zM1 11h4v4H1zM11 11h4v4h-4z" fill="#d9a84a"/><path d="M11 11h4v4h-4zM1 11h4v4H1z" fill="#3f73ab"/>`,
      wb: `${cube('#9aa29a','#6f766f','#808780')}${wire('#444')}<path d="M2.500 8L8 10.500 13.500 8M5 3v9M11 3v9" stroke="#444" fill="none"/>`,
      key: `<path d="M1 10l7-3 7 3-7 4z" fill="#f0d08a"/><path d="M1 10l7 4v2l-7-3zM15 10l-7 4v2l7-3z" fill="#c9963c"/><circle cx="8" cy="4" r="3" fill="#eef" stroke="#445" stroke-width="1.200"/><path d="M6 6l-3 3" stroke="#445" stroke-width="1.400"/>`,
      qr: `<rect x="1" y="1" width="14" height="14" fill="#fff" stroke="#3f73ab"/><path d="M3 3h4v4H3zM9 3h4v4H9zM3 9h4v4H3zM9 9h4v4H9z" fill="none" stroke="#3f73ab"/>`,
      pick: `<path d="M1 1h7v7H1z" fill="#6f9fcf"/><path d="M8 8h7v7H8z" fill="#eac98a"/><path d="M1 8h7v7H1zM8 1h7v7H8z" fill="#e2b25a"/><path d="M8 8l5 1-2 1 3 3-1 1-3-3-1 2z" fill="#222"/>`,
      fld: `<path d="M1 3l10-2 4 4v9L6 15l-5-4z" fill="#4f8fb0"/><path d="M6 9l3-2 3 2-2 4H7z" fill="#e2b25a"/><path d="M8 13V8" stroke="#111"/>`,
      hcub: `${cube('#d9a84a','#c09040','#eac98a')}<path d="M11 4v10M9.500 6L11 4l1.500 2" stroke="#333" fill="none"/>`,
      bk1: `<path d="M1 9l8-7 6 3-7 8z" fill="#3f8ac9"/><path d="M1 9l7 4v2l-7-4z" fill="#e2b25a"/><path d="M8 13l7-8v2l-7 8z" fill="#2f6ea8"/>`,
      bk2: `<path d="M1 8l7-5 7 3-7 7z" fill="#5c87b0"/><path d="M1 8l7 5v2l-7-5z" fill="#e2b25a"/><path d="M8 13l7-7v2l-7 7z" fill="#c09040"/>`,
      bk3: `<path d="M1 7l7-5 7 3-7 6z" fill="#667"/><path d="M1 7l7 4v3L1 10z" fill="#e2b25a"/><path d="M10 9l5 5M15 9l-5 5" stroke="#c6403a" stroke-width="1.600"/>`,
      pin: `<path d="M1 7l7-4 7 4-7 4z" fill="#d9a84a"/><path d="M1 8l7 4 7-4v2l-7 4-7-4z" fill="#667"/><path d="M8 1v14" stroke="#222" stroke-width="1.200"/>`,
      chev: `<path d="M5.500 5l2.500 2 2.500-2M5.500 9l2.500 2 2.500-2" stroke="#777" fill="none"/>`,
      // right strip
      outl: `<rect x="1.500" y="3.500" width="13" height="9" rx="2.500" fill="#f7fafc" stroke="#6f8ba5"/>`,
      r1: `<path d="M2 2h12M3 2v12h4M12 2v7" stroke="#444" fill="none" stroke-width="1.300"/>${bolt}`,
      r2: `<path d="M2 8l9-6 2 9-8 3z" fill="#8f9f9f"/>${bolt}`,
      r3: `<path d="M6 2v8M2 6h8" stroke="#3f73ab" stroke-width="2"/>${bolt}`,
      r4: `<path d="M2 13L12 2" stroke="#7a8fa5" stroke-width="1.200"/><path d="M9 1v4M7 3h4" stroke="#3f73ab"/><circle cx="3" cy="12" r="1.500" fill="#3f73ab"/>${bolt}`,
      r5: `<circle cx="7" cy="7" r="5.500" fill="none" stroke="#5a8f8f" stroke-width="1.200"/>${bolt}`,
      r6: `<path d="M1 15c1-7 6-5 8-9l4-4" fill="none" stroke="#5f7f7f" stroke-width="1.200"/>${bolt}`,
      r7: `<path d="M1 9l9-7 3 3-9 7z" fill="#4f8f6f"/><path d="M4 7l5 4" stroke="#bfe0cf"/>${bolt}`,
      r8: `${cube('#e8c070','#d9a84a','#b88a3a')}${bolt}`,
      r9: `${wire('#557f7f')}${bolt}`,
      r10: `<circle cx="8" cy="8" r="7" fill="#dc8f88" stroke="#c77"/><path d="M3 3l10 10" stroke="#f4e4e2" stroke-width="2"/>`,
      r11: `<rect x="8" y="1" width="6" height="6" fill="#7a55b0"/><rect x="1" y="8" width="6" height="6" fill="#eee" stroke="#bbb"/>${bolt}`,
      r12: `<path d="M2 2h4v3H2zM2 6h4v3H2zM2 10h4v4H2z" fill="#3f73ab"/><path d="M7 2v12" stroke="#333"/>${bolt}`,
      r13: `<path d="M2 2h4v3H2zM2 6h4v3H2zM2 10h4v4H2z" fill="#3f73ab"/><path d="M7 2v12" stroke="#333"/><circle cx="11" cy="4" r="2.500" fill="none" stroke="#667"/>${bolt}`,
      r14: `<path d="M1 3h4v3H1z" fill="#c6403a"/><path d="M6 3h4v3H6z" fill="#4f9f5f"/><path d="M11 3h4v3h-4z" fill="#e2a91f"/><path d="M1 7h4v3H1z" fill="#3f73ab"/><path d="M6 7h4v3H6z" fill="#c6403a"/>${bolt}`,
      r15: `<path d="M2 5l6-3 6 3-6 3zM2 8l6 3 6-3M2 11l6 3 6-3" fill="none" stroke="#2f6fa8" stroke-width="1.600"/>${bolt}`,
      r16: `<circle cx="7" cy="7" r="6" fill="#e3b0a8" stroke="#c99"/><path d="M3 3l8 8" stroke="#f4e4e2" stroke-width="2"/>${bolt}`,
    };

    const svg = (name) => `<svg class="w-[16px] h-[16px] shrink-0 opacity-[.85]" viewBox="0 0 16 16" font-family="Liberation Sans">${I[name] || ''}</svg>`;
    const arrow = `<span class="shrink-0 w-[6px] h-0 border-x-[3px] border-x-transparent border-t-[3px] border-t-[#777]"></span>`;
    const grip = `<span class="shrink-0 w-[1px] h-[16px] border-l border-dotted border-[#aaa]"></span>`;
    const sep = `<span class="shrink-0 w-[1px] h-[20px] bg-[#c9c9c9]"></span>`;
    const sizes = { v: 6, ':': 1, '|': 1 };

    // data is [centre x, icon]; each item is placed after the previous one in the flex row
    function fill(id, start, data) {
      let cursor = start;
      let html = '';
      for (const [c, n] of data) {
        const w = sizes[n] || 16;
        const m = c - w / 2 - cursor;
        const el = n === 'v' ? arrow : n === ':' ? grip : n === '|' ? sep : svg(n);
        html += `<span class="flex shrink-0" style="margin-left:${m}px">${el}</span>`;
        cursor = c + w / 2;
      }
      document.getElementById(id).innerHTML = html;
    }

    fill('row1', 0, [[19,'new'],[39,'open'],[58,'save'],[76,'print'],[95,'prev'],[110,':'],[124,'undo'],[143,'redo'],[159,':'],[174,'fit'],[190,'view'],[205,'|'],[218,'zwin'],[238,'zprev'],[257,'zsel'],[270,'|'],[283,'zout'],[302,'zout2'],[315,'|'],[327,'rot'],[346,'plane'],[365,'plane2'],[380,':'],[394,'vcube'],[414,'vcube'],[433,'vcube'],[451,'vcube2'],[467,':'],[481,'rcube'],[497,'v'],[507,':'],[523,'globe'],[538,'v'],[553,'ball'],[567,'v'],[582,'sblue'],[600,'sgreen'],[620,'sred'],[639,'sgray'],[654,':'],[669,'pen'],[689,'pen2'],[704,'v'],[712,'|'],[727,'pen3'],[741,'v'],[751,':'],[765,'qang'],[784,'qdist'],[804,'qlist'],[816,'|'],[829,'tools'],[848,'sheet'],[867,'sum'],[888,'grid'],[902,'v']]);
    fill('row2', 0, [[20,'plus'],[34,'v'],[52,'line'],[65,'v'],[80,'circ'],[95,'v'],[111,'rect'],[125,'v'],[141,'arc'],[155,'v'],[172,'spline'],[186,'v'],[201,'cyl'],[216,'v'],[227,':'],[238,'trim'],[262,'xsect'],[276,'v'],[287,':'],[299,'m1'],[319,'m2'],[341,'m3'],[361,'m4'],[381,'m5'],[400,'m6'],[420,'m7'],[439,'m8'],[448,'|'],[461,'ang'],[476,'v'],[487,'arr'],[505,'boxp'],[525,'v'],[536,':'],[550,'hint'],[569,'note'],[582,'|'],[596,'hdim'],[610,'v'],[624,'vdim'],[640,'v'],[650,'|'],[664,'hatch'],[678,'v'],[689,':'],[701,'sgrid'],[721,'sgrid2'],[741,'dome'],[761,'sweep'],[782,'cylp'],[795,'v'],[804,'|'],[815,'hammer'],[835,'arcs'],[855,'mesh'],[867,'|'],[883,'stack'],[896,'v'],[912,'lay'],[926,'v'],[940,'stair'],[955,'v']]);
    fill('row3', 455, [[466,'qbolt'],[486,'qgear'],[506,'xpale'],[521,'v'],[535,'help'],[554,':'],[567,'pale1'],[581,'|'],[594,'pale2'],[607,'|'],[620,'cyc'],[634,'|'],[648,'dashy'],[662,'v'],[670,'|'],[685,'dash'],[699,'v'],[714,'cur'],[732,'cchk'],[745,'|'],[759,'p1'],[778,'p2'],[796,'p3'],[810,'|'],[823,'p4'],[840,'back'],[855,'|'],[867,'curc'],[880,'|'],[893,'no'],[912,'ok'],[931,'qp']]);

    // side strips: same idea, [centre y, icon], measured from the top of the strip (y=116)
    const vsizes = { v: 6, ':': 1, '-': 1 };
    function strip(id, data) {
      let cursor = 116;
      let html = '';
      for (const [c, n] of data) {
        const h = vsizes[n] || 16;
        const m = c - h / 2 - cursor;
        let el;
        if (n === 'v') el = `<span class="block w-0 h-0 border-y-[3px] border-y-transparent border-l-[3px] border-l-[#888]"></span>`;
        else if (n === ':') el = `<span class="block w-[16px] h-[1px] border-t border-dotted border-[#aaa]"></span>`;
        else if (n === '-') el = `<span class="block w-[18px] h-[1px] bg-[#c9c9c9]"></span>`;
        else el = svg(n);
        html += `<span class="flex shrink-0 justify-center" style="margin-top:${m}px">${el}</span>`;
        cursor = c + h / 2;
      }
      document.getElementById(id).innerHTML = html;
    }
    strip('leftStrip', [[118,':'],[130,'tb'],[149,'tb2'],[168,'bend'],[187,'hous'],[200,'-'],[213,'sh1'],[228,'v'],[245,'sh2'],[258,'v'],[268,'-'],[281,'sh3'],[300,'sh4'],[319,'sh5'],[333,'v'],[343,'-'],[356,'sh6'],[375,'sh7'],[390,'v'],[407,'frame'],[421,'v'],[436,'wb'],[455,'key'],[474,'qr'],[489,':'],[503,'pick'],[521,'fld'],[540,'hcub'],[554,'-'],[563,'bk1'],[586,'bk2'],[605,'bk3'],[618,'-'],[631,'pin'],[645,'-'],[653,'chev']]);
    strip('rightStrip', [[118,':'],[130,'tb'],[151,'outl'],[291,':'],[307,'r1'],[325,'r2'],[343,'r3'],[363,'r4'],[382,'r5'],[402,'r6'],[420,'r7'],[438,'r8'],[457,'r9'],[476,'r10'],[490,'-'],[502,'r11'],[522,'r12'],[540,'r13'],[553,'-'],[565,'r14'],[585,'r15'],[603,'r16'],[617,'-']]);
  </script>
</body>
</html>
